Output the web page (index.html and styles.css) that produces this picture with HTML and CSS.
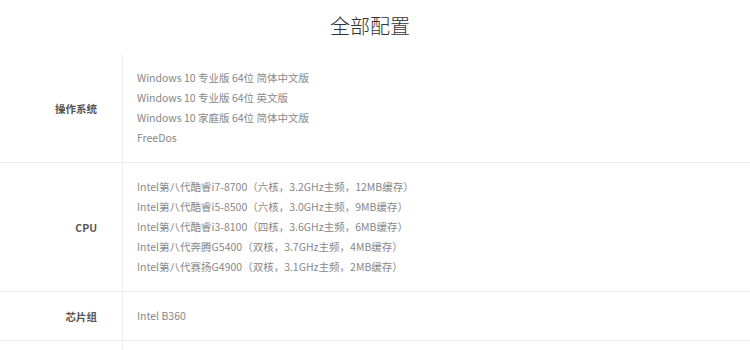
FILE: index.html
```html
<!DOCTYPE html>
<html lang="zh-CN">
<head>
<meta charset="UTF-8">
<meta name="viewport" content="width=device-width, initial-scale=1.0">
<title>全部配置</title>
<link rel="stylesheet" href="styles.css">
</head>
<body>

<div class="title">全部配置</div>

<div class="specTable">
  <div class="specRow">
    <div class="specName">操作系统</div>
    <div class="specValue">
      <p>Windows 10 专业版 64位 简体中文版</p>
      <p>Windows 10 专业版 64位 英文版</p>
      <p>Windows 10 家庭版 64位 简体中文版</p>
      <p>FreeDos</p>
    </div>
  </div>
  <div class="specRow">
    <div class="specName">CPU</div>
    <div class="specValue">
      <p>Intel第八代酷睿i7-8700（六核，3.2GHz主频，12MB缓存）</p>
      <p>Intel第八代酷睿i5-8500（六核，3.0GHz主频，9MB缓存）</p>
      <p>Intel第八代酷睿i3-8100（四核，3.6GHz主频，6MB缓存）</p>
      <p>Intel第八代奔腾G5400（双核，3.7GHz主频，4MB缓存）</p>
      <p>Intel第八代赛扬G4900（双核，3.1GHz主频，2MB缓存）</p>
    </div>
  </div>
  <div class="specRow">
    <div class="specName">芯片组</div>
    <div class="specValue">
      <p>Intel B360</p>
    </div>
  </div>
  <!-- next row continues below the fold -->
  <div class="specRow specRowEmpty">
    <div class="specName"></div>
    <div class="specValue"></div>
  </div>
</div>

</body>
</html>
```

FILE: styles.css
```css
body {
  margin: 0;
  padding: 0;
  background-color: #fff;
  font-family: "Noto Sans CJK SC", "Noto Sans", sans-serif;
}

/* page heading */
.title {
  padding: 12px 10px 14px 0;
  line-height: 28px;
  font-size: 20px;
  font-weight: 300;
  color: #333;
  text-align: center;
}

/* config table */
.specTable {
  width: 100%;
}

.specRow {
  display: grid;
  grid-template-columns: 123px 1fr;
  border-bottom: 1px solid #ececec;
}

.specRowEmpty {
  min-height: 48px;
}

.specName {
  display: flex;
  align-items: center;
  justify-content: flex-end;
  padding-right: 25px;
  border-right: 1px solid #efefef;
  font-size: 10.5px;
  font-weight: bold;
  color: #555;
}

.specValue {
  padding: 14px;
  font-size: 10.5px;
  line-height: 20px;
  color: #888;
}

.specValue p {
  margin: 0;
}
```
